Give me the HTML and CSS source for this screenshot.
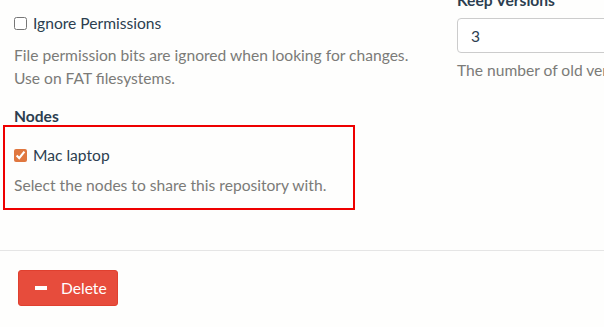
FILE: index.html
```
<!DOCTYPE html>
<html lang="en">
<head>
    <meta charset="UTF-8">
    <meta name="viewport" content="width=device-width, initial-scale=1.0">
    <title>Edit Repository</title>
    <link rel="stylesheet" href="styles.css">
</head>
<body>

<div class="modal">
    <div class="modal-body">
        <div class="form-grid">
            <div class="col">
                <div class="checkbox first">
                    <label><input type="checkbox"> Ignore Permissions</label>
                </div>
                <p class="help-block">File permission bits are ignored when looking for changes.<br>Use on FAT filesystems.</p>

                <div class="group-label">Nodes</div>
                <div class="highlight">
                    <div class="checkbox">
                        <label><input type="checkbox" class="accent" checked> Mac laptop</label>
                    </div>
                    <p class="help-block">Select the nodes to share this repository with.</p>
                </div>
            </div>

            <div class="col">
                <div class="group-label top">Keep Versions</div>
                <input class="form-control" type="text" value="3">
                <p class="help-block narrow">The number of old versions to keep, per file.</p>
            </div>
        </div>
    </div>

    <div class="modal-footer">
        <button class="btn btn-danger">
            <span class="icon-minus"></span>
            Delete
        </button>
    </div>
</div>

</body>
</html>
```

FILE: styles.css
```
body {
    margin: 0;
    font-family: 'Lato', 'Liberation Sans', sans-serif;
    font-size: 15.6px;
    color: #2c3e50;
    background: #fefefd;
    overflow: hidden;
}

.modal-body {
    padding: 0 0 0 14px;
    margin-top: -10px;
    height: 260px;
}

.form-grid {
    display: grid;
    grid-template-columns: 428px 300px;
    column-gap: 15px;
}

.checkbox {
    line-height: 20px;
}

.checkbox.first {
    margin-top: 23px;
}

.checkbox label {
    display: flex;
    align-items: center;
    gap: 6px;
}

.checkbox input {
    width: 13px;
    height: 13px;
    margin: 0;
}

.checkbox input.accent {
    accent-color: #e0773f;
}

.help-block {
    margin: 11px 0 0;
    line-height: 23px;
    color: #7b7b78;
}

.group-label {
    margin-top: 17px;
    line-height: 18px;
    font-weight: bold;
}

.group-label.top {
    margin-top: 0;
    line-height: 20px;
    margin-bottom: 8px;
}

.highlight {
    width: 339px;
    margin-left: -11px;
    padding: 18px 0 11px 9px;
    border: 2px solid #ee0000;
}

.highlight .help-block {
    margin-top: 9px;
}

.form-control {
    box-sizing: border-box;
    width: 300px;
    height: 35px;
    padding: 0 13px;
    font-family: inherit;
    font-size: 15.6px;
    color: #2c3e50;
    border: 1px solid #cccccc;
    border-radius: 4px;
    background: #ffffff;
}

.help-block.narrow {
    margin-top: 6px;
    white-space: nowrap;
}

.modal-footer {
    border-top: 1px solid #e5e5e5;
    padding: 19px 18px;
}

.btn {
    display: flex;
    align-items: center;
    box-sizing: border-box;
    width: 100px;
    height: 36px;
    padding: 0 0 0 16px;
    font-family: inherit;
    font-size: 15.6px;
    border-radius: 3px;
    cursor: pointer;
}

.btn-danger {
    background: #e74c3c;
    border: 1px solid #e0402f;
    color: #ffffff;
}

.icon-minus {
    display: inline-block;
    width: 12px;
    height: 4px;
    background: #ffffff;
    margin-right: 14px;
}
```
